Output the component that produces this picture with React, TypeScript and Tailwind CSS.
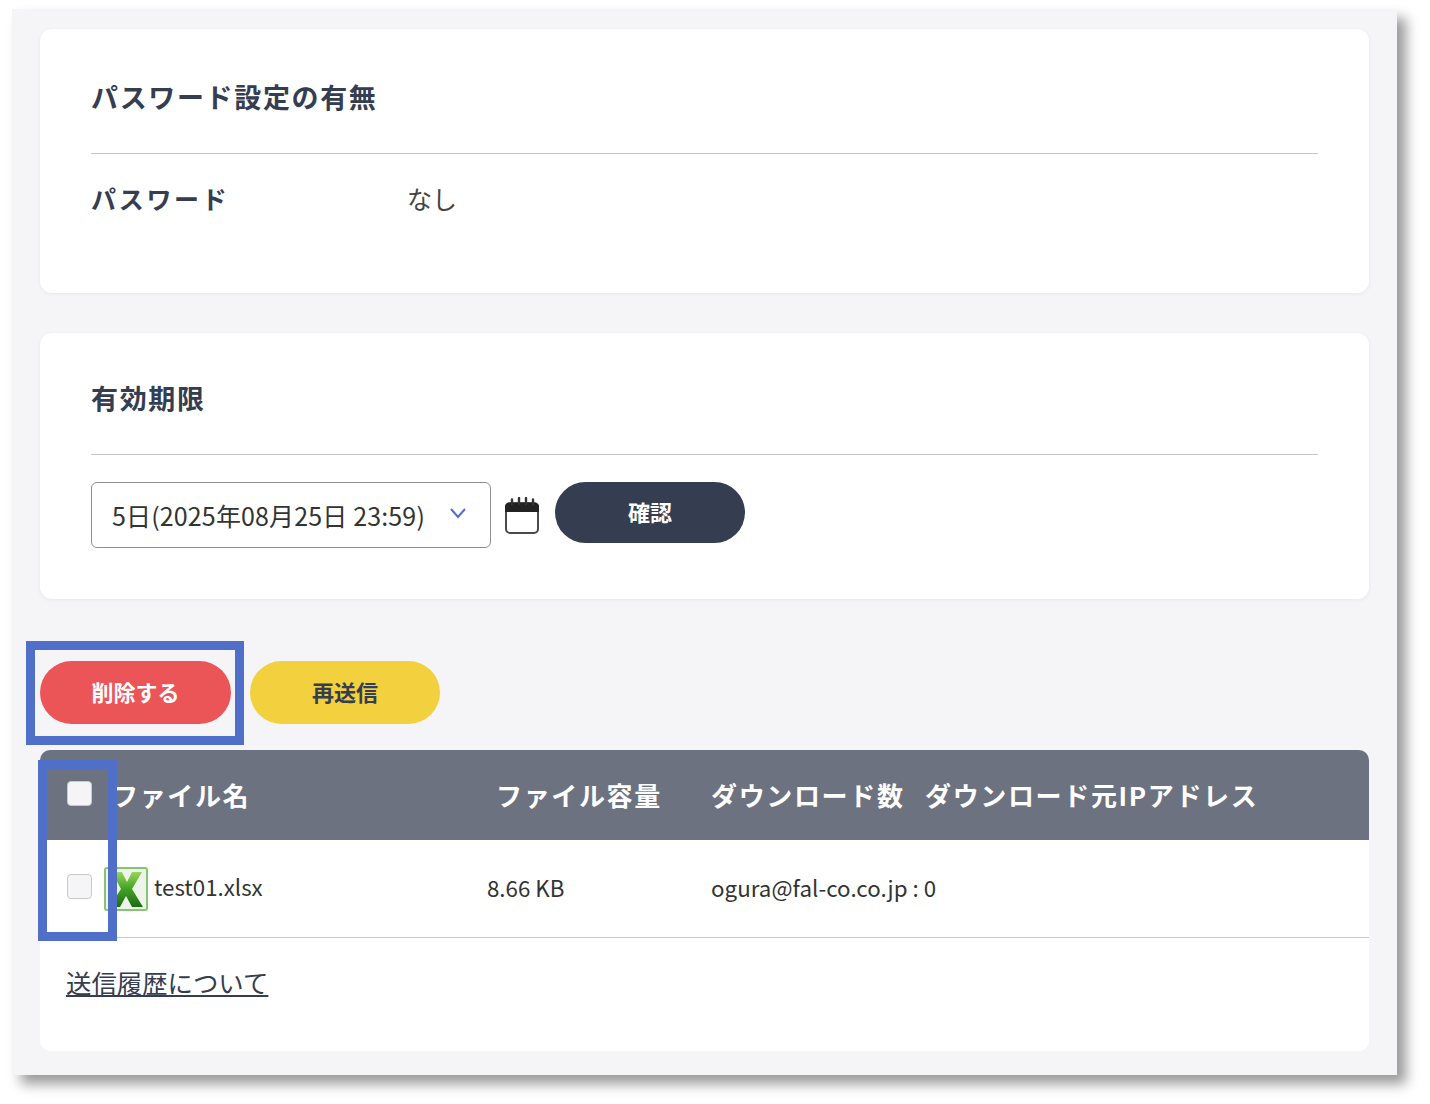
import React from "react";

const ExcelIcon = () => (
  <svg width="44" height="44" viewBox="0 0 44 44" className="shrink-0">
    <defs>
      <linearGradient id="xgreen" x1="0" y1="0" x2="0" y2="1">
        <stop offset="0" stopColor="#9ad65c" />
        <stop offset="0.45" stopColor="#46a526" />
        <stop offset="1" stopColor="#1c6d12" />
      </linearGradient>
    </defs>
    <rect x="1" y="1" width="42" height="42" rx="2" fill="#eef4ea" stroke="#86c471" strokeWidth="2" />
    <path d="M8 5h10l5 10 5-10h10L28 22l11 18H28l-6-11-6 11H5l12-18z" fill="url(#xgreen)" />
  </svg>
);

const CalendarIcon = () => (
  <svg width="36" height="38" viewBox="0 0 36 38" className="shrink-0">
    <rect x="2" y="6" width="32" height="30" rx="4" fill="#fff" stroke="#4a4a4a" strokeWidth="2" />
    <path d="M1 10a4 4 0 0 1 4-4h26a4 4 0 0 1 4 4v5H1z" fill="#222" />
    <path d="M8 2.5v5M15 1v6M22 1v6M29 2.5v5" stroke="#333" strokeWidth="2.4" strokeLinecap="round" />
  </svg>
);

const Checkbox = () => (
  <span className="block w-[25px] h-[25px] rounded-[4px] bg-[#f5f5f8] border border-[#c9c9cc]" />
);

export default function App() {
  return (
    <div
      className="relative w-[1430px] h-[1104px] bg-white pt-[9px] pl-[12px] text-[#353d50]"
      style={{ fontFamily: '"Noto Sans CJK JP", "Noto Sans", sans-serif' }}
    >
      <div className="w-[1385px] h-[1066px] bg-[#f5f5f8] px-[28px] pt-[20px] shadow-[9px_9px_12px_rgba(0,0,0,0.4)]">
        <section className="h-[264px] bg-white rounded-[12px] px-[51px] pt-[46px] shadow-[0_1px_4px_rgba(0,0,0,0.06)]">
          <h2 className="text-[27px] leading-[44px] font-bold tracking-[1.65px] pb-[34px] border-b border-[#c4c6cc]">
            パスワード設定の有無
          </h2>
          <div className="flex items-center mt-[23px] h-[44px]">
            <span className="w-[316px] text-[25px] font-bold tracking-[2.7px]">パスワード</span>
            <span className="text-[25px] text-[#444]">なし</span>
          </div>
        </section>

        <section className="h-[266px] mt-[40px] bg-white rounded-[12px] px-[51px] pt-[43px] shadow-[0_1px_4px_rgba(0,0,0,0.06)]">
          <h2 className="text-[27px] leading-[44px] font-bold tracking-[1.65px] pb-[34px] border-b border-[#c4c6cc]">
            有効期限
          </h2>
          <div className="flex items-start mt-[27px]">
            <div className="w-[400px] h-[66px] flex items-center justify-between rounded-[6px] border border-[#8f8f8f] pl-[20px] pr-[22px] text-[#333]">
              <span className="text-[25px] tracking-[0.15px] pt-[1px]">5日(2025年08月25日 23:59)</span>
              <svg width="20" height="14" viewBox="0 0 20 14" className="mb-[4px]">
                <path d="M3 3l7 8 7-8" fill="none" stroke="#4f6fc9" strokeWidth="2" />
              </svg>
            </div>
            <div className="ml-[13px] mt-[15px]">
              <CalendarIcon />
            </div>
            <button className="ml-[15px] w-[190px] h-[61px] rounded-full bg-[#353d50] text-white text-[22px] font-bold pb-[3px]">
              確認
            </button>
          </div>
        </section>

        <div className="flex gap-[19px] mt-[62px]">
          <button className="w-[191px] h-[63px] rounded-full bg-[#eb5557] text-white text-[22px] font-bold pb-[2px]">
            削除する
          </button>
          <button className="w-[190px] h-[63px] rounded-full bg-[#f3d03e] text-[#353d50] text-[22px] font-bold pb-[2px]">
            再送信
          </button>
        </div>

        <div className="h-[301px] mt-[26px] bg-white rounded-[10px] overflow-hidden">
          <div className="h-[90px] bg-[#6d7280] text-white text-[26px] font-bold tracking-[1.65px] grid grid-cols-[72px_384px_215px_214px_1fr] items-center">
            <div className="pl-[27px] mb-[4px]">
              <Checkbox />
            </div>
            <div className="pb-[2px]">ファイル名</div>
            <div className="pb-[2px]">ファイル容量</div>
            <div className="pb-[2px]">ダウンロード数</div>
            <div className="pb-[2px]">ダウンロード元IPアドレス</div>
          </div>
          <div className="h-[98px] border-b border-[#c9c9cc] grid grid-cols-[447px_224px_1fr] items-center text-[22.3px] text-[#333]">
            <div className="flex items-center pl-[27px]">
              <span className="mb-[5px]">
                <Checkbox />
              </span>
              <span className="ml-[12px]">
                <ExcelIcon />
              </span>
              <span className="ml-[6px] pb-[3px]">test01.xlsx</span>
            </div>
            <div className="pb-[1px]">8.66 KB</div>
            <div className="pb-[1px] tracking-[0.05px]">ogura@fal-co.co.jp : 0</div>
          </div>
          <a className="block mt-[24px] ml-[26px] text-[25.4px] leading-[40px] underline text-[#353d50]">
            送信履歴について
          </a>
        </div>
      </div>

      <div className="absolute left-[26px] top-[641px] w-[218px] h-[104px] border-[9px] border-[#4f6fc9]" />
      <div className="absolute left-[38px] top-[760px] w-[79px] h-[181px] border-[9px] border-[#4f6fc9]" />
    </div>
  );
}
